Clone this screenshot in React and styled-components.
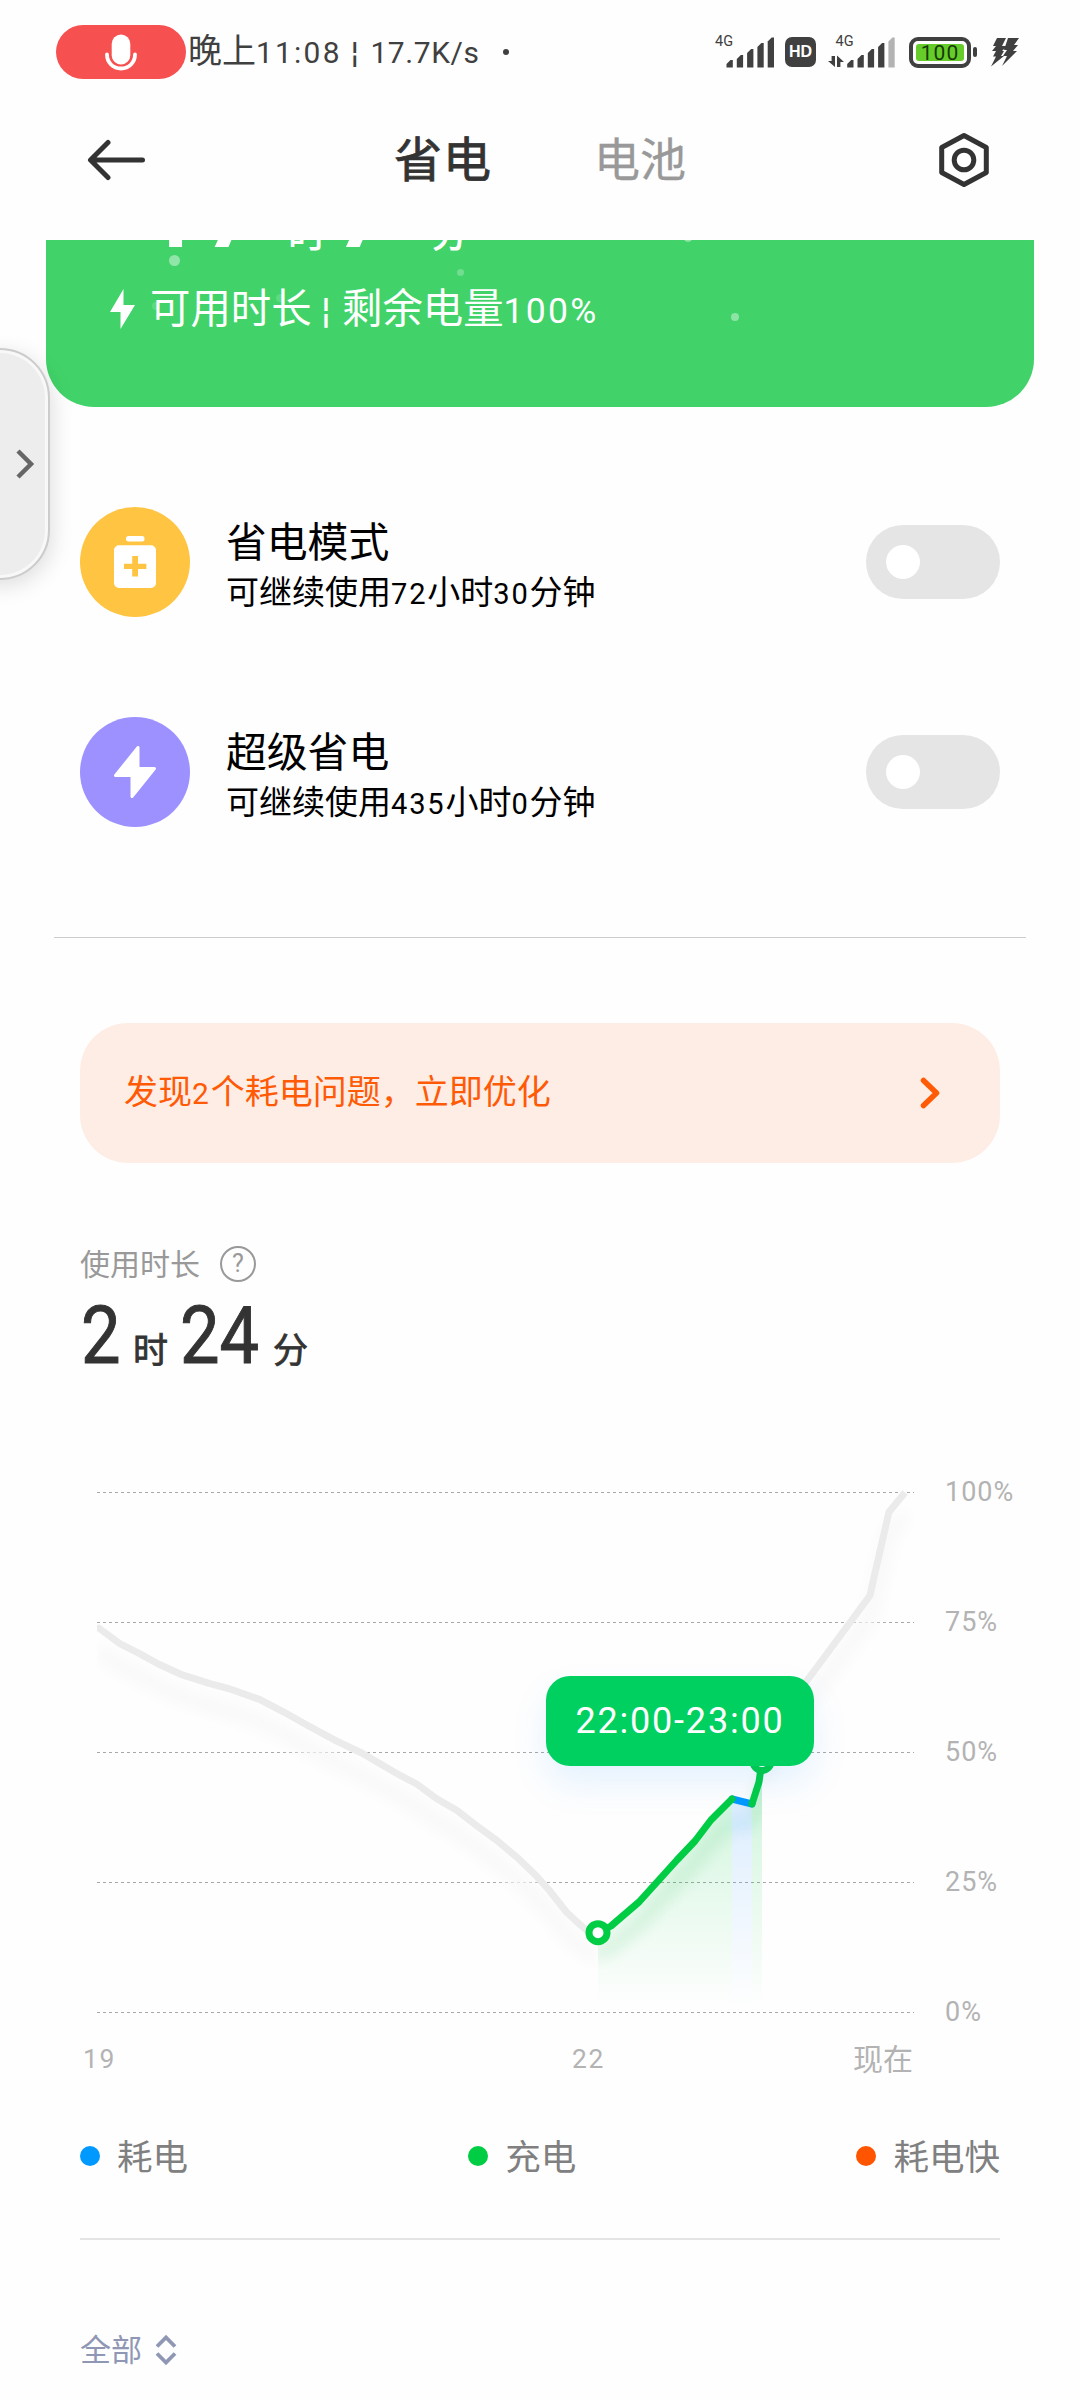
import React, { useState } from "react";
import styled, { createGlobalStyle } from "styled-components";

const GlobalStyle = createGlobalStyle`
  * {
    box-sizing: border-box;
  }
  body {
    margin: 0;
    background: #fefefe;
    font-family: "Noto Sans CJK SC", sans-serif;
    color: #000;
  }
  svg {
    display: block;
    flex-shrink: 0;
  }
`;

const Screen = styled.div`
  position: relative;
  width: 1080px;
  height: 2400px;
  overflow: hidden;
  background: #fefefe;
`;

// latin digits are a bit smaller and wider set than the hanzi around them
const Num = styled.span`
  font-family: Roboto, "Noto Sans CJK SC", sans-serif;
  font-size: 0.88em;
  letter-spacing: ${(props) => props.$gap || "0.063em"};
`;

/* ---------- status bar ---------- */

const StatusBar = styled.div`
  display: flex;
  align-items: center;
  height: 104px;
  padding: 0 61px 0 56px;
  color: #404040;
`;

const MicPill = styled.div`
  display: flex;
  justify-content: center;
  align-items: center;
  width: 130px;
  height: 54px;
  border-radius: 27px;
  background: #f65050;
`;

const StatusText = styled.div`
  margin: -3px 0 0 2px;
  font-size: 34px;
  line-height: 50px;
  white-space: pre;
`;

const StatusDot = styled.i`
  width: 6px;
  height: 6px;
  margin-left: 23px;
  border-radius: 50%;
  background: #404040;
`;

const StatusIcons = styled.div`
  display: flex;
  align-items: center;
  margin-left: auto;
`;

const HdBadge = styled.div`
  width: 31px;
  height: 30px;
  margin: 0 12px 0 11px;
  border-radius: 7px;
  background: #404040;
  color: #fff;
  font: bold 16px/30px "Liberation Sans", sans-serif;
  text-align: center;
`;

const Battery = styled.div`
  display: flex;
  align-items: center;
  margin: 0 14px;
  &::after {
    content: "";
    width: 4px;
    height: 10px;
    margin-left: 2px;
    border-radius: 2px;
    background: #404040;
  }
`;

const BatteryBody = styled.div`
  width: 62px;
  height: 31px;
  padding: 3px;
  border: 4px solid #404040;
  border-radius: 9px;
`;

const BatteryLevel = styled.div`
  height: 17px;
  border-radius: 3px;
  background: #66cc29;
  color: #163a05;
  font: 21px/18px Roboto, sans-serif;
  letter-spacing: 1px;
  text-align: center;
`;

/* ---------- header ---------- */

const Header = styled.div`
  display: flex;
  align-items: center;
  height: 112px;
  padding: 0 90px 0 87px;
`;

const Tabs = styled.div`
  display: flex;
  width: 400px;
  margin: -8px 0 0 249px;
`;

const Tab = styled.div`
  width: 200px;
  font-size: ${(props) => (props.$active ? 48 : 46)}px;
  line-height: 60px;
  letter-spacing: ${(props) => (props.$active ? 1 : 0)}px;
  -webkit-text-stroke: ${(props) => (props.$active ? "0.8px #333" : "0.3px #999")};
  color: ${(props) => (props.$active ? "#333" : "#999")};
  cursor: pointer;
`;

const IconRight = styled.div`
  margin-left: auto;
`;

/* ---------- green card ---------- */

const Hero = styled.div`
  position: relative;
  display: flex;
  flex-direction: column;
  justify-content: flex-end;
  height: 167px;
  margin: 24px 46px 0;
  padding: 0 64px 70px;
  border-radius: 0 0 48px 48px;
  background: #41d369;
  color: #fff;
  overflow: hidden;
`;

const HeroTime = styled.div`
  display: flex;
  align-items: baseline;
  flex-shrink: 0;
  height: 100px;
  margin-bottom: 15px;
  padding-left: 36px;
  font-size: 38px;
  line-height: 100px;
`;

const HeroDigits = styled.span`
  width: ${(props) => props.$w}px;
  font-family: Roboto, sans-serif;
  font-weight: 700;
  font-size: 92px;
  letter-spacing: 6px;
`;

const HeroUnit = styled.span`
  width: ${(props) => props.$w}px;
  font-weight: 500;
`;

const HeroInfo = styled.div`
  display: flex;
  align-items: center;
  flex-shrink: 0;
  height: 56px;
  font-size: 40.4px;
  line-height: 56px;
`;

const HeroInfoText = styled.div`
  margin: -2px 0 0 15px;
`;

const Bubble = styled.i`
  position: absolute;
  left: ${(props) => props.$x}px;
  top: ${(props) => props.$y}px;
  width: ${(props) => props.$d}px;
  height: ${(props) => props.$d}px;
  border-radius: 50%;
  background: rgba(255, 255, 255, ${(props) => props.$a});
`;

/* floating handle on the left edge */
const SideHandle = styled.div`
  position: absolute;
  left: -52px;
  top: 348px;
  display: flex;
  align-items: center;
  justify-content: flex-end;
  width: 102px;
  height: 232px;
  padding-right: 13px;
  border: 2px solid #ccc;
  border-radius: 50px;
  background: #ededed;
  box-shadow: inset 0 0 0 3px #f8f8f8, 2px 6px 22px rgba(0, 0, 0, 0.13);
`;

/* ---------- mode rows ---------- */

const ModeList = styled.div`
  margin-top: 50px;
`;

const ModeRow = styled.div`
  display: flex;
  align-items: center;
  height: 210px;
  padding: 0 80px;
`;

const ModeIcon = styled.div`
  display: flex;
  align-items: center;
  justify-content: center;
  width: 110px;
  height: 110px;
  border-radius: 50%;
  background: ${(props) => props.$bg};
`;

const ModeText = styled.div`
  margin: 7px 0 0 36px;
`;

const ModeTitle = styled.div`
  font-size: 40.8px;
  line-height: 52px;
`;

const ModeDesc = styled.div`
  font-size: 33px;
  line-height: 48px;
`;

const Toggle = styled.button`
  display: flex;
  align-items: center;
  justify-content: ${(props) => (props.$on ? "flex-end" : "flex-start")};
  width: 134px;
  height: 74px;
  margin-left: auto;
  padding: 0 20px;
  border: none;
  border-radius: 37px;
  background: ${(props) => (props.$on ? "#00cc44" : "#e5e5e5")};
  cursor: pointer;
  &::before {
    content: "";
    width: 34px;
    height: 34px;
    border-radius: 50%;
    background: #fff;
  }
`;

const SectionLine = styled.div`
  height: 1px;
  margin: 60px 54px 0;
  background: #ccc;
`;

/* ---------- warning ---------- */

const Warning = styled.div`
  display: flex;
  align-items: center;
  justify-content: space-between;
  height: 140px;
  margin: 85px 80px 0;
  padding: 0 60px 0 44px;
  border-radius: 48px;
  background: #feede5;
  color: #ff5a05;
  font-size: 34px;
  line-height: 48px;
`;

const WarningText = styled.div`
  margin-top: -2px;
`;

/* ---------- usage ---------- */

const UsageTitle = styled.div`
  display: flex;
  align-items: center;
  height: 36px;
  margin: 83px 80px 0;
  color: #999;
  font-size: 30px;
  line-height: 36px;
`;

const UsageName = styled.div`
  margin-top: -5px;
`;

const Help = styled.div`
  width: 36px;
  height: 36px;
  margin-left: 20px;
  border: 2.5px solid #999;
  border-radius: 50%;
  font: 25px/31px Roboto, sans-serif;
  text-align: center;
`;

const UsageTime = styled.div`
  display: flex;
  align-items: baseline;
  height: 158px;
  padding: 4px 81px 0;
  color: #333;
  line-height: 100px;
`;

const UsageDigits = styled.span`
  width: ${(props) => props.$w}px;
  font-family: Roboto, sans-serif;
  font-size: 80px;
  -webkit-text-stroke: 1px #333;
  transform: scaleX(0.88);
  transform-origin: 0 0;
`;

const UsageUnit = styled.span`
  width: ${(props) => props.$w}px;
  font-size: 35px;
  -webkit-text-stroke: 0.8px #333;
`;

/* ---------- chart ---------- */

const Chart = styled.div`
  position: relative;
  display: flex;
  height: 600px;
  padding-left: 80px;
`;

const YAxis = styled.div`
  display: flex;
  flex-direction: column;
  gap: 100px;
  padding: 37px 0 0 20px;
  color: #b3b3b3;
  font: 27px/30px Roboto, sans-serif;
  letter-spacing: 1px;
`;

const XAxis = styled.div`
  display: grid;
  grid-template-columns: 489px 1fr auto;
  align-items: center;
  width: 830px;
  height: 38px;
  margin-left: 83px;
  color: #b3b3b3;
  font-size: 30px;
  line-height: 38px;
`;

const Now = styled.span`
  margin-top: -5px;
`;

const Tooltip = styled.div`
  position: absolute;
  left: 546px;
  top: 236px;
  width: 268px;
  height: 90px;
  border-radius: 24px;
  background: #00d060;
  box-shadow: 0 18px 36px rgba(0, 140, 255, 0.1);
  color: #fff;
  font: 36px/90px Roboto, sans-serif;
  letter-spacing: 1.8px;
  text-align: center;
`;

const Legend = styled.div`
  display: flex;
  justify-content: space-between;
  height: 40px;
  margin: 58px 80px 0;
`;

const LegendItem = styled.div`
  display: flex;
  align-items: center;
  color: #808080;
  font-size: 35.5px;
  line-height: 40px;
  &::before {
    content: "";
    width: 20px;
    height: 20px;
    margin-right: 17px;
    border-radius: 50%;
    background: ${(props) => props.$color};
  }
`;

const LegendName = styled.span`
  margin-top: -3px;
`;

const ListLine = styled.div`
  height: 2px;
  margin: 62px 80px 0;
  background: #e4e4e4;
`;

const Filter = styled.div`
  display: flex;
  align-items: center;
  gap: 13px;
  height: 40px;
  margin: 90px 80px 0;
  color: #8f97b5;
  font-size: 31px;
  line-height: 40px;
`;

const FilterName = styled.span`
  margin-top: -5px;
`;

const bubbles = [
  { x: 123, y: 15, d: 11, a: 0.42 },
  { x: 411, y: 29, d: 7, a: 0.25 },
  { x: 106, y: 62, d: 8, a: 0.15 },
  { x: 230, y: 54, d: 8, a: 0.15 },
  { x: 685, y: 73, d: 8, a: 0.4 },
  { x: 638, y: -6, d: 8, a: 0.4 },
];

const modes = [
  { id: "save", title: "省电模式", color: "#ffc442", hours: 72, minutes: 30 },
  { id: "super", title: "超级省电", color: "#9c91ff", hours: 435, minutes: 0 },
];

const legend = [
  { name: "耗电", color: "#0099ff" },
  { name: "充电", color: "#00cc44" },
  { name: "耗电快", color: "#ff5500" },
];

const before =
  "19,188.2 39.3,203.3 60,213.9 78.3,224 100.7,234.3 130,243.7 150,249 180,259.6 203.3,271.8 225,284 256.7,301.2 281.7,313 316.7,333.5 336.7,344 356.7,358.8 376.7,370.2 396.7,385.7 416.7,400.4 436.7,417.1 456.7,436.3 468.6,449.5 486.4,472 497,482 508,491.4 518,493";
const after = "682,321 695,278 726,242 790,155.5 794.3,136 809,72 825,52.6";
const charge1 = "518,493 531,486 559,462 597,420 615,401 631,380 652,359";
const drain = "652,359 672,364";
const charge2 = "672,364 679,342 682,321";

const gridLines = [52.5, 182.5, 312.5, 442.5, 572.5];

function Signal({ weak, data }) {
  const dx = data ? 7.7 : 0;
  const tops = [24, 19, 13, 7, 1.5];
  const w = 59 + (data ? 8 : 0);
  return (
    <svg width={w} height="44" viewBox={`0 -6 ${w} 44`} fill="#404040">
      <text x={data ? 7.5 : 0} y="10.2" fontSize="14.5" fontFamily="Roboto, sans-serif">4G</text>
      {data && <path d="M7 20V31L0 25h3.6V20zM9 31V19.5l7 6.5h-3.6v5z" />}
      {tops.map((top, i) => {
        const x = 11.5 + dx + i * 10.3;
        return (
          <path
            key={top}
            d={`M${x} 31.5V${top + 4}L${x + 4} ${top}H${x + 6.3}V31.5z`}
            fill={weak && i === 4 ? "#b3b3b3" : "#404040"}
          />
        );
      })}
    </svg>
  );
}

function ModeGlyph({ id }) {
  if (id === "save") {
    return (
      <svg width="42" height="52" fill="#fff">
        <rect x="12" y="0" width="18.5" height="5.5" rx="2.5" />
        <path
          fillRule="evenodd"
          d="M5 9.300h32a5 5 0 0 1 5 5v32.700a5 5 0 0 1-5 5H5a5 5 0 0 1-5-5V14.300a5 5 0 0 1 5-5zM18.200 20v7.800H10v5.200h8.200v7.400h5.800V33h8.400v-5.200H24V20z"
        />
      </svg>
    );
  }
  return (
    <svg width="42" height="52" fill="#fff" stroke="#fff" strokeWidth="3" strokeLinejoin="round">
      <path d="M24 1.500V22.500H40.500L18 50.500V29.500H1.500z" />
    </svg>
  );
}

function UsageGraph() {
  return (
    <svg width="845" height="600" fill="none">
      <defs>
        <linearGradient id="greenFill" x1="0" y1="320" x2="0" y2="568" gradientUnits="userSpaceOnUse">
          <stop offset="0" stopColor="#00cc44" stopOpacity="0.2" />
          <stop offset="1" stopColor="#00cc44" stopOpacity="0" />
        </linearGradient>
        <linearGradient id="blueFill" x1="0" y1="355" x2="0" y2="568" gradientUnits="userSpaceOnUse">
          <stop offset="0" stopColor="#3399ff" stopOpacity="0.17" />
          <stop offset="1" stopColor="#3399ff" stopOpacity="0" />
        </linearGradient>
        <filter id="soft" x="-20%" y="-20%" width="140%" height="150%">
          <feGaussianBlur stdDeviation="7" />
        </filter>
        <clipPath id="plot">
          <rect x="17" y="40" width="817" height="540" />
        </clipPath>
        <clipPath id="selected">
          <rect x="518" y="300" width="164" height="270" />
        </clipPath>
      </defs>
      {gridLines.map((y) => (
        <path key={y} d={`M17 ${y}H834`} stroke="#a8a8a8" strokeWidth="1.2" strokeDasharray="3 3" />
      ))}
      <g clipPath="url(#plot)" strokeLinejoin="round">
        <g filter="url(#soft)" stroke="#f8f8f8" strokeWidth="14" transform="translate(0 22)">
          <polyline points={before} />
          <polyline points={after} />
        </g>
        <g stroke="#ebebeb" strokeWidth="7" strokeLinecap="round">
          <polyline points={before} />
          <polyline points={after} strokeLinecap="butt" />
        </g>
      </g>
      <polygon points={`518,570 ${charge1} 652,570`} fill="url(#greenFill)" />
      <polygon points={`652,570 ${drain} 672,570`} fill="url(#blueFill)" />
      <polygon points={`672,570 ${charge2} 682,570`} fill="url(#greenFill)" />
      <g clipPath="url(#selected)">
        <g filter="url(#soft)" strokeWidth="14" opacity="0.1" transform="translate(0 22)">
          <polyline points={charge1} stroke="#00aa33" />
          <polyline points={drain} stroke="#0088ee" />
          <polyline points={charge2} stroke="#00aa33" />
        </g>
      </g>
      <g strokeWidth="7" strokeLinejoin="round" strokeLinecap="round">
        <polyline points={drain} stroke="#0099ff" />
        <polyline points={charge1} stroke="#00cc44" />
        <polyline points={charge2} stroke="#00cc44" />
      </g>
      <g fill="#fff" stroke="#00cc44" strokeWidth="7">
        <circle cx="518" cy="492.700" r="9" />
        <circle cx="682" cy="321.500" r="9" />
      </g>
    </svg>
  );
}

function App() {
  const [on, setOn] = useState({});
  const [tab, setTab] = useState("省电");

  return (
    <Screen>
      <GlobalStyle />
      <StatusBar>
        <MicPill>
          <svg width="32" height="37" fill="none" stroke="#fff">
            <rect x="6.700" y="0.500" width="18.600" height="30" rx="9.300" fill="#fff" stroke="none" />
            <path d="M2 20.500c0 8 6 14 14 14s14-6 14-14" strokeWidth="3.800" strokeLinecap="round" />
          </svg>
        </MicPill>
        <StatusText>
          晚上<Num $gap="0.075em">11:08 ¦ </Num>
          <Num $gap="0.02em">17.7K/s</Num>
        </StatusText>
        <StatusDot />
        <StatusIcons>
          <Signal />
          <HdBadge>HD</HdBadge>
          <Signal data weak />
          <Battery>
            <BatteryBody>
              <BatteryLevel>100</BatteryLevel>
            </BatteryBody>
          </Battery>
          <svg width="28" height="30" fill="#404040">
            <path d="M6 1h9l-4 8h5L5 20l3-6H1l4-5H2zM17 1h11l-5 7h4l-5 6h4L11 29l5-10h-4l4-6h-3z" />
            <path d="M5 14h8l-3 5h3L0 29.500l5-10H2z" />
          </svg>
        </StatusIcons>
      </StatusBar>

      <Header>
        <svg width="58" height="42" fill="none" stroke="#333" strokeWidth="5" strokeLinecap="round" strokeLinejoin="round">
          <path d="M55.500 21H4M21 3.500L3.500 21L21 38.500" />
        </svg>
        <Tabs>
          {["省电", "电池"].map((name) => (
            <Tab key={name} $active={tab === name} onClick={() => setTab(name)}>
              {name}
            </Tab>
          ))}
        </Tabs>
        <IconRight>
          <svg width="52" height="56" fill="none" stroke="#333" strokeWidth="5" strokeLinejoin="round">
            <path d="M26 3.500L48.300 15.500V40.500L26 52.500L3.700 40.500V15.500z" />
            <circle cx="26" cy="28" r="9.800" />
          </svg>
        </IconRight>
      </Header>

      <Hero>
        {bubbles.map((b) => (
          <Bubble key={b.x} $x={b.x} $y={b.y} $d={b.d} $a={b.a} />
        ))}
        <HeroTime>
          <HeroDigits $w={142}>17</HeroDigits>
          <HeroUnit $w={48}>时</HeroUnit>
          <HeroDigits $w={95}>7</HeroDigits>
          <HeroUnit $w={40}>分</HeroUnit>
        </HeroTime>
        <HeroInfo>
          <svg width="25" height="40" fill="#fff">
            <path d="M13.500 0L0 23H10.500V40L25 16H13.500z" />
          </svg>
          <HeroInfoText>
            可用时长<Num $gap="0.04em"> ¦ </Num>剩余电量<Num>100%</Num>
          </HeroInfoText>
        </HeroInfo>
      </Hero>

      <ModeList>
        {modes.map((m) => (
          <ModeRow key={m.id}>
            <ModeIcon $bg={m.color}>
              <ModeGlyph id={m.id} />
            </ModeIcon>
            <ModeText>
              <ModeTitle>{m.title}</ModeTitle>
              <ModeDesc>
                可继续使用<Num>{m.hours}</Num>小时<Num>{m.minutes}</Num>分钟
              </ModeDesc>
            </ModeText>
            <Toggle $on={on[m.id]} onClick={() => setOn({ ...on, [m.id]: !on[m.id] })} />
          </ModeRow>
        ))}
      </ModeList>
      <SectionLine />

      <Warning>
        <WarningText>
          发现<Num>2</Num>个耗电问题，立即优化
        </WarningText>
        <svg width="20" height="32" fill="none" stroke="#ff5a05" strokeWidth="5.500" strokeLinecap="round" strokeLinejoin="round">
          <path d="M3.500 3.500L16.500 16L3.500 28.500" />
        </svg>
      </Warning>

      <UsageTitle>
        <UsageName>使用时长</UsageName>
        <Help>?</Help>
      </UsageTitle>
      <UsageTime>
        <UsageDigits $w={52}>2</UsageDigits>
        <UsageUnit $w={47}>时</UsageUnit>
        <UsageDigits $w={93}>24</UsageDigits>
        <UsageUnit $w={40}>分</UsageUnit>
      </UsageTime>

      <Chart>
        <UsageGraph />
        <YAxis>
          {["100%", "75%", "50%", "25%", "0%"].map((label) => (
            <span key={label}>{label}</span>
          ))}
        </YAxis>
        <Tooltip>22:00-23:00</Tooltip>
      </Chart>
      <XAxis>
        <Num>19</Num>
        <Num>22</Num>
        <Now>现在</Now>
      </XAxis>

      <Legend>
        {legend.map((item) => (
          <LegendItem key={item.name} $color={item.color}>
            <LegendName>{item.name}</LegendName>
          </LegendItem>
        ))}
      </Legend>
      <ListLine />

      <Filter>
        <FilterName>全部</FilterName>
        <svg width="22" height="32" fill="none" stroke="#8f97b5" strokeWidth="3.800">
          <path d="M2 12.500L11 3.500L20 12.500M2 19.500L11 28.500L20 19.500" />
        </svg>
      </Filter>

      <SideHandle>
        <svg width="20" height="32" fill="none" stroke="#666" strokeWidth="4.500">
          <path d="M3 3L16 16L3 29" />
        </svg>
      </SideHandle>
    </Screen>
  );
}

export default App;
